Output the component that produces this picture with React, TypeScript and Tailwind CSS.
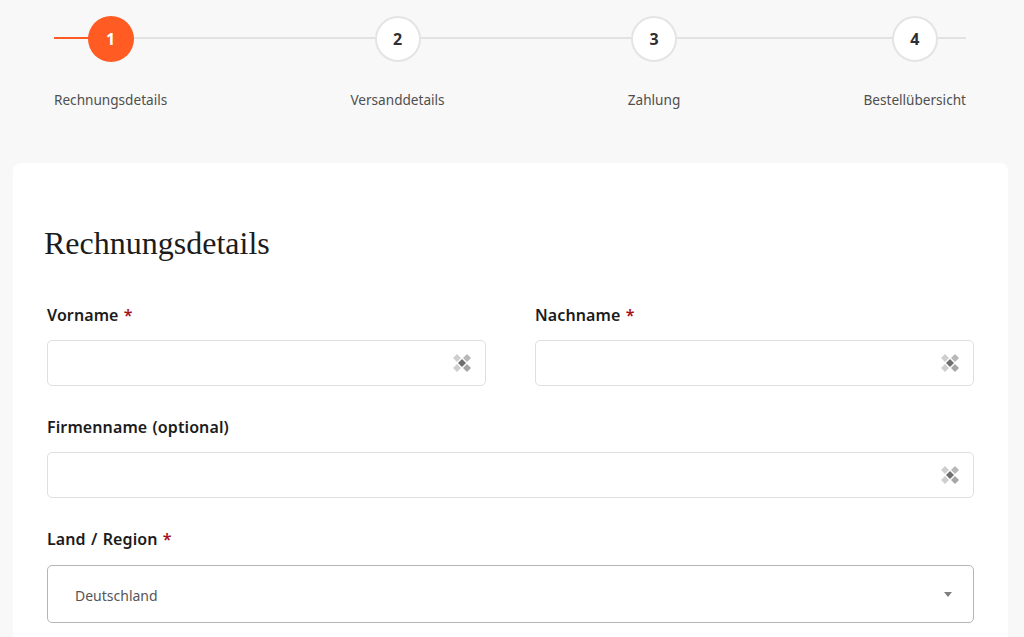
import React from "react";

const steps = [
  { num: 1, label: "Rechnungsdetails", active: true },
  { num: 2, label: "Versanddetails", active: false },
  { num: 3, label: "Zahlung", active: false },
  { num: 4, label: "Bestellübersicht", active: false },
];

function KeyIcon() {
  return (
    <svg width="18" height="18" viewBox="0 0 18 18" className="shrink-0">
      <polygon points="4,0 8,4 4,8 0,4" fill="#cfcfcf" />
      <polygon points="14,0 18,4 14,8 10,4" fill="#b8b8b8" />
      <polygon points="4,10 8,14 4,18 0,14" fill="#cfcfcf" />
      <polygon points="14,10 18,14 14,18 10,14" fill="#a6a6a6" />
      <polygon points="9,5 13,9 9,13 5,9" fill="#6f6f6f" />
    </svg>
  );
}

function Field({ label, required }: { label: string; required?: boolean }) {
  return (
    <div className="flex-1">
      <div className="h-[22px] text-[16px] leading-[22px] font-semibold tracking-[0.1px] [word-spacing:1px] text-[#1c1c1c]">
        {label}
        {required && <span className="text-[#a5121f]"> *</span>}
      </div>
      <div className="mt-[14px] flex h-[46px] items-center justify-end rounded-[5px] border border-[#dfdfdf] bg-white pr-[14px]">
        <KeyIcon />
      </div>
    </div>
  );
}

export default function App() {
  return (
    <div className="h-[637px] overflow-hidden bg-[#f8f8f8] font-['Noto_Sans',sans-serif]">
      {/* Stepper */}
      <div className="relative mr-[58px] ml-[54px] flex h-[163px] justify-between pt-[16px]">
        <div className="absolute top-[37px] right-0 left-0 h-[2px] bg-[#e2e2e2]" />
        <div className="absolute top-[37px] left-0 h-[2px] w-[40px] bg-[#ff5b22]" />
        {steps.map((step) => (
          <div key={step.num} className="relative flex flex-col items-center">
            <div
              className={
                step.active
                  ? "flex h-[46px] w-[46px] items-center justify-center rounded-full bg-[#ff5b22] text-[16px] font-bold text-white"
                  : "flex h-[46px] w-[46px] items-center justify-center rounded-full border-2 border-[#e4e4e4] bg-white text-[16px] font-bold text-[#2f2f33]"
              }
            >
              {step.num}
            </div>
            <div className="mt-[28px] text-[13.6px] leading-[20px] text-[#4f4f4f]">{step.label}</div>
          </div>
        ))}
      </div>

      {/* Card */}
      <div className="mx-[13px] w-[995px] rounded-t-[8px] bg-white px-[34px] pt-[60px] pb-[40px]">
        <h1 className="-ml-[3px] h-[40px] font-['Liberation_Serif',serif] text-[32px] leading-[40px] font-normal text-[#1c1c1c]">
          Rechnungsdetails
        </h1>
        <div className="mt-[41px] flex gap-[49px]">
          <Field label="Vorname" required />
          <Field label="Nachname" required />
        </div>
        <div className="mt-[30px] flex">
          <Field label="Firmenname (optional)" />
        </div>
        <div className="mt-[30px]">
          <div className="h-[22px] text-[16px] leading-[22px] font-semibold tracking-[0.1px] [word-spacing:1px] text-[#1c1c1c]">
            Land / Region <span className="text-[#a5121f]">*</span>
          </div>
          <div className="mt-[15px] flex h-[58px] items-center justify-between rounded-[5px] border border-[#b5b5b5] bg-white pr-[21px] pl-[27px]">
            <span className="pt-[2px] text-[14px] text-[#555555]">Deutschland</span>
            <span className="h-0 w-0 border-x-[4px] border-t-[5px] border-x-transparent border-t-[#808080]" />
          </div>
        </div>
      </div>
    </div>
  );
}
